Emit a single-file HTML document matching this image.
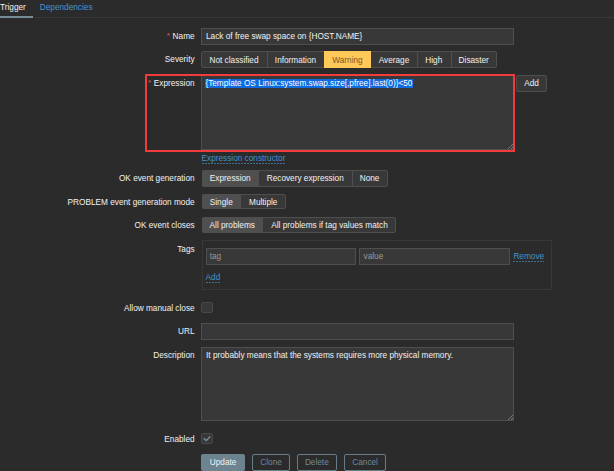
<!DOCTYPE html>
<html><head><meta charset="utf-8">
<style>
html,body{margin:0;padding:0;}
body{width:614px;height:471px;overflow:hidden;background:#2b2b2b;position:relative;font-family:"Liberation Sans",sans-serif;font-size:8.25px;color:#f2f2f2;}
.a{position:absolute;box-sizing:border-box;}
.t{position:absolute;white-space:nowrap;line-height:10px;}
.req{color:#e45959;font-size:8px;position:relative;top:-1.5px;margin-right:2.7px;}
.link{color:#4393d0;}
.dot{display:inline-block;padding-bottom:0;background-image:linear-gradient(to right,rgba(71,150,196,0.65) 2px,transparent 2px);background-size:3px 1px;background-repeat:repeat-x;background-position:0 100%;}
svg{position:absolute;}
</style></head><body>

<div class="t" style="left:0px;top:3px;">Trigger</div>
<div class="t" style="left:39.8px;top:3px;color:#4393d0;">Dependencies</div>
<div class="a" style="left:0px;top:17px;width:614px;height:1px;background:#383838;"></div>
<div class="a" style="left:0px;top:15.5px;width:33px;height:2.5px;background:#768d99;"></div>
<div class="t" style="right:419.4px;top:32px;text-align:right"><span class="req">*</span>Name</div>
<div class="a" style="left:201px;top:28px;width:313px;height:17px;background:#383838;border:1px solid #4f4f4f;"></div>
<div class="t" style="left:206px;top:32px;">Lack of free swap space on {HOST.NAME}</div>
<div class="t" style="right:419.4px;top:55px;text-align:right">Severity</div>
<div class="a" style="left:201px;top:51px;width:296px;height:16.5px;background:#383838;border:1px solid #4f4f4f;border-radius:2px;box-sizing:border-box;"></div>
<div class="a" style="left:267px;top:51px;width:1px;height:16.5px;background:#4f4f4f;"></div>
<div class="a" style="left:324px;top:51px;width:47px;height:16.5px;background:#ffc859;"></div>
<div class="a" style="left:417px;top:51px;width:1px;height:16.5px;background:#4f4f4f;"></div>
<div class="a" style="left:450.5px;top:51px;width:1px;height:16.5px;background:#4f4f4f;"></div>
<div class="t" style="left:201px;width:66px;top:55.5px;text-align:center;">Not classified</div>
<div class="t" style="left:267px;width:57px;top:55.5px;text-align:center;">Information</div>
<div class="t" style="left:324px;width:47px;top:55.5px;text-align:center;color:#6f5a2a;">Warning</div>
<div class="t" style="left:371px;width:46px;top:55.5px;text-align:center;">Average</div>
<div class="t" style="left:417px;width:33.5px;top:55.5px;text-align:center;">High</div>
<div class="t" style="left:450.5px;width:46.5px;top:55.5px;text-align:center;">Disaster</div>
<div class="t" style="right:419.4px;top:79px;text-align:right"><span class="req">*</span>Expression</div>
<div class="a" style="left:201px;top:75px;width:313px;height:75px;background:#383838;border:1px solid #4f4f4f;"></div>
<div class="a" style="left:205.4px;top:78.5px;width:207.8px;height:9.5px;background:#0f6ade;"></div>
<div class="t" style="left:205.4px;top:79px;color:#ffffff;">{Template OS Linux:system.swap.size[,pfree].last(0)}&lt;50</div>
<div class="a" style="left:351px;top:87px;width:17.5px;height:1px;background-image:linear-gradient(to right,rgba(230,40,60,0.75) 1px,transparent 1px);background-size:2px 1px;"></div>
<svg style="left:506px;top:141px" width="8" height="8"><path d="M2 8 L7 3 M5 8 L7 6" stroke="#8a8a8a" stroke-width="0.8"/></svg>
<div class="a" style="left:145px;top:73.5px;width:370.2px;height:78.4px;border:2.5px solid #f23b3b;"></div>
<div class="a" style="left:516px;top:75px;width:31px;height:16.8px;background:#383838;border:1px solid #4f4f4f;border-radius:2px;"></div>
<div class="t" style="left:516px;width:31px;top:79px;text-align:center;">Add</div>
<div class="t link" style="left:201.5px;top:154px;"><span class="dot">Expression constructor</span></div>
<div class="t" style="right:419.4px;top:174px;text-align:right">OK event generation</div>
<div class="a" style="left:201.5px;top:170px;width:186.2px;height:16.5px;background:#383838;border:1px solid #4f4f4f;border-radius:2px;box-sizing:border-box;"></div>
<div class="a" style="left:201.5px;top:170px;width:57.5px;height:16.5px;background:#4f4f4f;border-radius:2px;border-top-right-radius:0;border-bottom-right-radius:0;"></div>
<div class="a" style="left:351.5px;top:170px;width:1px;height:16.5px;background:#4f4f4f;"></div>
<div class="t" style="left:201.5px;width:57.5px;top:174px;text-align:center;">Expression</div>
<div class="t" style="left:259px;width:92.5px;top:174px;text-align:center;">Recovery expression</div>
<div class="t" style="left:351.5px;width:36.19999999999999px;top:174px;text-align:center;">None</div>
<div class="t" style="right:419.4px;top:197.5px;text-align:right">PROBLEM event generation mode</div>
<div class="a" style="left:201.5px;top:193.7px;width:84.0px;height:15.800000000000011px;background:#383838;border:1px solid #4f4f4f;border-radius:2px;box-sizing:border-box;"></div>
<div class="a" style="left:201.5px;top:193.7px;width:39.5px;height:15.800000000000011px;background:#4f4f4f;border-radius:2px;border-top-right-radius:0;border-bottom-right-radius:0;"></div>
<div class="t" style="left:201.5px;width:39.5px;top:197.5px;text-align:center;">Single</div>
<div class="t" style="left:241px;width:44.5px;top:197.5px;text-align:center;">Multiple</div>
<div class="t" style="right:419.4px;top:221px;text-align:right">OK event closes</div>
<div class="a" style="left:201.5px;top:217.3px;width:194.5px;height:16.0px;background:#383838;border:1px solid #4f4f4f;border-radius:2px;box-sizing:border-box;"></div>
<div class="a" style="left:201.5px;top:217.3px;width:61.5px;height:16.0px;background:#4f4f4f;border-radius:2px;border-top-right-radius:0;border-bottom-right-radius:0;"></div>
<div class="t" style="left:201.5px;width:61.5px;top:221px;text-align:center;">All problems</div>
<div class="t" style="left:263px;width:133px;top:221px;text-align:center;">All problems if tag values match</div>
<div class="t" style="right:419.4px;top:245px;text-align:right">Tags</div>
<div class="a" style="left:201.5px;top:240px;width:350.5px;height:49.5px;border:1px solid #383838;"></div>
<div class="a" style="left:205.6px;top:248px;width:150.2px;height:16.6px;background:#383838;border:1px solid #4f4f4f;"></div>
<div class="t" style="left:209.7px;top:251.5px;color:#9a9a9a;">tag</div>
<div class="a" style="left:359.4px;top:248px;width:150.5px;height:16.6px;background:#383838;border:1px solid #4f4f4f;"></div>
<div class="t" style="left:363.5px;top:251.5px;color:#9a9a9a;">value</div>
<div class="t link" style="left:513.4px;top:252px;"><span class="dot">Remove</span></div>
<div class="t link" style="left:205.6px;top:273px;"><span class="dot">Add</span></div>
<div class="t" style="right:419.4px;top:303.5px;text-align:right">Allow manual close</div>
<div class="a" style="left:201px;top:302px;width:12px;height:11px;background:#383838;border:1px solid #494949;border-radius:2px;"></div>
<div class="t" style="right:419.4px;top:327px;text-align:right">URL</div>
<div class="a" style="left:201px;top:323.2px;width:313px;height:16.6px;background:#383838;border:1px solid #4f4f4f;"></div>
<div class="t" style="right:419.4px;top:351px;text-align:right">Description</div>
<div class="a" style="left:201px;top:347.2px;width:313px;height:73.5px;background:#383838;border:1px solid #4f4f4f;"></div>
<div class="t" style="left:206px;top:351px;">It probably means that the systems requires more physical memory.</div>
<svg style="left:506px;top:412px" width="8" height="8"><path d="M2 8 L7 3 M5 8 L7 6" stroke="#8a8a8a" stroke-width="0.8"/></svg>
<div class="t" style="right:419.4px;top:435px;text-align:right">Enabled</div>
<div class="a" style="left:201px;top:433px;width:12px;height:11px;background:#383838;border:1px solid #494949;border-radius:2px;"></div>
<svg style="left:201px;top:433px" width="12" height="12"><path d="M2.6 5.4 L5.3 7.6 L9.2 3.5" fill="none" stroke="#768d99" stroke-width="1.4"/></svg>
<div class="a" style="left:201px;top:454.2px;width:43.7px;height:16.5px;background:#6d8390;border-radius:2px;"></div>
<div class="t" style="left:201.5px;width:43.19999999999999px;top:458px;text-align:center;">Update</div>
<div class="a" style="left:252.3px;top:454.2px;width:37.5px;height:16.5px;border:1px solid #667c88;border-radius:2px;"></div>
<div class="t" style="left:252.3px;width:37.5px;top:458px;text-align:center;color:#71889a;">Clone</div>
<div class="a" style="left:296.5px;top:454.2px;width:40.69999999999999px;height:16.5px;border:1px solid #667c88;border-radius:2px;"></div>
<div class="t" style="left:296.5px;width:40.69999999999999px;top:458px;text-align:center;color:#71889a;">Delete</div>
<div class="a" style="left:344.1px;top:454.2px;width:42.0px;height:16.5px;border:1px solid #667c88;border-radius:2px;"></div>
<div class="t" style="left:344.1px;width:42.0px;top:458px;text-align:center;color:#71889a;">Cancel</div>
</body></html>
